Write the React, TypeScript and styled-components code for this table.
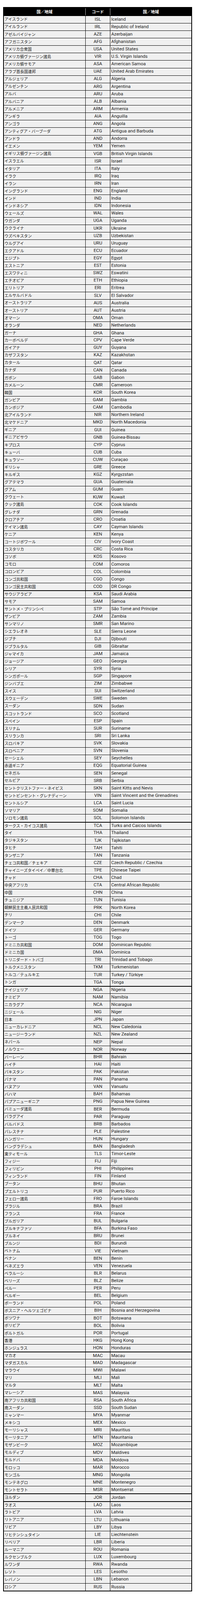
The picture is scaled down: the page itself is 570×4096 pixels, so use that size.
import React from "react";
import styled, { createGlobalStyle } from "styled-components";

type Entry = [string, string, string];

const groups: Entry[][] = [
  [
    ["アイスランド", "ISL", "Iceland"],
    ["アイルランド", "IRL", "Republic of Ireland"],
    ["アゼルバイジャン", "AZE", "Azerbaijan"],
    ["アフガニスタン", "AFG", "Afghanistan"],
    ["アメリカ合衆国", "USA", "United States"],
    ["アメリカ領ヴァージン諸島", "VIR", "U.S. Virgin Islands"],
    ["アメリカ領サモア", "ASA", "American Samoa"],
    ["アラブ首長国連邦", "UAE", "United Arab Emirates"],
    ["アルジェリア", "ALG", "Algeria"],
    ["アルゼンチン", "ARG", "Argentina"],
    ["アルバ", "ARU", "Aruba"],
    ["アルバニア", "ALB", "Albania"],
    ["アルメニア", "ARM", "Armenia"],
    ["アンギラ", "AIA", "Anguilla"],
    ["アンゴラ", "ANG", "Angola"],
    ["アンティグア・バーブーダ", "ATG", "Antigua and Barbuda"],
    ["アンドラ", "AND", "Andorra"],
    ["イエメン", "YEM", "Yemen"],
    ["イギリス領ヴァージン諸島", "VGB", "British Virgin Islands"],
    ["イスラエル", "ISR", "Israel"],
    ["イタリア", "ITA", "Italy"],
    ["イラク", "IRQ", "Iraq"],
    ["イラン", "IRN", "Iran"],
    ["イングランド", "ENG", "England"],
    ["インド", "IND", "India"],
    ["インドネシア", "IDN", "Indonesia"],
    ["ウェールズ", "WAL", "Wales"],
    ["ウガンダ", "UGA", "Uganda"],
    ["ウクライナ", "UKR", "Ukraine"],
    ["ウズベキスタン", "UZB", "Uzbekistan"],
    ["ウルグアイ", "URU", "Uruguay"],
    ["エクアドル", "ECU", "Ecuador"],
    ["エジプト", "EGY", "Egypt"],
    ["エストニア", "EST", "Estonia"],
    ["エスワティニ", "SWZ", "Eswatini"],
    ["エチオピア", "ETH", "Ethiopia"],
    ["エリトリア", "ERI", "Eritrea"],
    ["エルサルバドル", "SLV", "El Salvador"],
    ["オーストラリア", "AUS", "Australia"],
    ["オーストリア", "AUT", "Austria"],
    ["オマーン", "OMA", "Oman"],
    ["オランダ", "NED", "Netherlands"],
  ],
  [
    ["ガーナ", "GHA", "Ghana"],
    ["カーボベルデ", "CPV", "Cape Verde"],
    ["ガイアナ", "GUY", "Guyana"],
    ["カザフスタン", "KAZ", "Kazakhstan"],
    ["カタール", "QAT", "Qatar"],
    ["カナダ", "CAN", "Canada"],
    ["ガボン", "GAB", "Gabon"],
    ["カメルーン", "CMR", "Cameroon"],
    ["韓国", "KOR", "South Korea"],
    ["ガンビア", "GAM", "Gambia"],
    ["カンボジア", "CAM", "Cambodia"],
    ["北アイルランド", "NIR", "Northern Ireland"],
    ["北マケドニア", "MKD", "North Macedonia"],
    ["ギニア", "GUI", "Guinea"],
    ["ギニアビサウ", "GNB", "Guinea-Bissau"],
    ["キプロス", "CYP", "Cyprus"],
    ["キューバ", "CUB", "Cuba"],
    ["キュラソー", "CUW", "Curaçao"],
    ["ギリシャ", "GRE", "Greece"],
    ["キルギス", "KGZ", "Kyrgyzstan"],
    ["グアテマラ", "GUA", "Guatemala"],
    ["グアム", "GUM", "Guam"],
    ["クウェート", "KUW", "Kuwait"],
    ["クック諸島", "COK", "Cook Islands"],
    ["グレナダ", "GRN", "Grenada"],
    ["クロアチア", "CRO", "Croatia"],
    ["ケイマン諸島", "CAY", "Cayman Islands"],
    ["ケニア", "KEN", "Kenya"],
    ["コートジボワール", "CIV", "Ivory Coast"],
    ["コスタリカ", "CRC", "Costa Rica"],
    ["コソボ", "KOS", "Kosovo"],
    ["コモロ", "COM", "Comoros"],
    ["コロンビア", "COL", "Colombia"],
    ["コンゴ共和国", "CGO", "Congo"],
    ["コンゴ民主共和国", "COD", "DR Congo"],
  ],
  [
    ["サウジアラビア", "KSA", "Saudi Arabia"],
    ["サモア", "SAM", "Samoa"],
    ["サントメ・プリンシペ", "STP", "São Tomé and Príncipe"],
    ["ザンビア", "ZAM", "Zambia"],
    ["サンマリノ", "SMR", "San Marino"],
    ["シエラレオネ", "SLE", "Sierra Leone"],
    ["ジブチ", "DJI", "Djibouti"],
    ["ジブラルタル", "GIB", "Gibraltar"],
    ["ジャマイカ", "JAM", "Jamaica"],
    ["ジョージア", "GEO", "Georgia"],
    ["シリア", "SYR", "Syria"],
    ["シンガポール", "SGP", "Singapore"],
    ["ジンバブエ", "ZIM", "Zimbabwe"],
    ["スイス", "SUI", "Switzerland"],
    ["スウェーデン", "SWE", "Sweden"],
    ["スーダン", "SDN", "Sudan"],
    ["スコットランド", "SCO", "Scotland"],
    ["スペイン", "ESP", "Spain"],
    ["スリナム", "SUR", "Suriname"],
    ["スリランカ", "SRI", "Sri Lanka"],
    ["スロバキア", "SVK", "Slovakia"],
    ["スロベニア", "SVN", "Slovenia"],
    ["セーシェル", "SEY", "Seychelles"],
    ["赤道ギニア", "EQG", "Equatorial Guinea"],
    ["セネガル", "SEN", "Senegal"],
    ["セルビア", "SRB", "Serbia"],
    ["セントクリストファー・ネイビス", "SKN", "Saint Kitts and Nevis"],
    ["セントビンセント・グレナディーン", "VIN", "Saint Vincent and the Grenadines"],
    ["セントルシア", "LCA", "Saint Lucia"],
    ["ソマリア", "SOM", "Somalia"],
    ["ソロモン諸島", "SOL", "Solomon Islands"],
  ],
  [
    ["タークス・カイコス諸島", "TCA", "Turks and Caicos Islands"],
    ["タイ", "THA", "Thailand"],
    ["タジキスタン", "TJK", "Tajikistan"],
    ["タヒチ", "TAH", "Tahiti"],
    ["タンザニア", "TAN", "Tanzania"],
    ["チェコ共和国／チェキア", "CZE", "Czech Republic / Czechia"],
    ["チャイニーズタイペイ／中華台北", "TPE", "Chinese Taipei"],
    ["チャド", "CHA", "Chad"],
    ["中央アフリカ", "CTA", "Central African Republic"],
    ["中国", "CHN", "China"],
    ["チュニジア", "TUN", "Tunisia"],
    ["朝鮮民主主義人民共和国", "PRK", "North Korea"],
    ["チリ", "CHI", "Chile"],
    ["デンマーク", "DEN", "Denmark"],
    ["ドイツ", "GER", "Germany"],
    ["トーゴ", "TOG", "Togo"],
    ["ドミニカ共和国", "DOM", "Dominican Republic"],
    ["ドミニカ国", "DMA", "Dominica"],
    ["トリニダード・トバゴ", "TRI", "Trinidad and Tobago"],
    ["トルクメニスタン", "TKM", "Turkmenistan"],
    ["トルコ／テュルキエ", "TUR", "Turkey / Türkiye"],
    ["トンガ", "TGA", "Tonga"],
  ],
  [
    ["ナイジェリア", "NGA", "Nigeria"],
    ["ナミビア", "NAM", "Namibia"],
    ["ニカラグア", "NCA", "Nicaragua"],
    ["ニジェール", "NIG", "Niger"],
    ["日本", "JPN", "Japan"],
    ["ニューカレドニア", "NCL", "New Caledonia"],
    ["ニュージーランド", "NZL", "New Zealand"],
    ["ネパール", "NEP", "Nepal"],
    ["ノルウェー", "NOR", "Norway"],
  ],
  [
    ["バーレーン", "BHR", "Bahrain"],
    ["ハイチ", "HAI", "Haiti"],
    ["パキスタン", "PAK", "Pakistan"],
    ["パナマ", "PAN", "Panama"],
    ["バヌアツ", "VAN", "Vanuatu"],
    ["バハマ", "BAH", "Bahamas"],
    ["パプアニューギニア", "PNG", "Papua New Guinea"],
    ["バミューダ諸島", "BER", "Bermuda"],
    ["パラグアイ", "PAR", "Paraguay"],
    ["バルバドス", "BRB", "Barbados"],
    ["パレスチナ", "PLE", "Palestine"],
    ["ハンガリー", "HUN", "Hungary"],
    ["バングラデシュ", "BAN", "Bangladesh"],
    ["東ティモール", "TLS", "Timor-Leste"],
    ["フィジー", "FIJ", "Fiji"],
    ["フィリピン", "PHI", "Philippines"],
    ["フィンランド", "FIN", "Finland"],
    ["ブータン", "BHU", "Bhutan"],
    ["プエルトリコ", "PUR", "Puerto Rico"],
    ["フェロー諸島", "FRO", "Faroe Islands"],
    ["ブラジル", "BRA", "Brazil"],
    ["フランス", "FRA", "France"],
    ["ブルガリア", "BUL", "Bulgaria"],
    ["ブルキナファソ", "BFA", "Burkina Faso"],
    ["ブルネイ", "BRU", "Brunei"],
    ["ブルンジ", "BDI", "Burundi"],
    ["ベトナム", "VIE", "Vietnam"],
    ["ベナン", "BEN", "Benin"],
    ["ベネズエラ", "VEN", "Venezuela"],
    ["ベラルーシ", "BLR", "Belarus"],
    ["ベリーズ", "BLZ", "Belize"],
    ["ペルー", "PER", "Peru"],
    ["ベルギー", "BEL", "Belgium"],
    ["ポーランド", "POL", "Poland"],
    ["ボスニア・ヘルツェゴビナ", "BIH", "Bosnia and Herzegovina"],
    ["ボツワナ", "BOT", "Botswana"],
    ["ボリビア", "BOL", "Bolivia"],
    ["ポルトガル", "POR", "Portugal"],
    ["香港", "HKG", "Hong Kong"],
    ["ホンジュラス", "HON", "Honduras"],
  ],
  [
    ["マカオ", "MAC", "Macau"],
    ["マダガスカル", "MAD", "Madagascar"],
    ["マラウイ", "MWI", "Malawi"],
    ["マリ", "MLI", "Mali"],
    ["マルタ", "MLT", "Malta"],
    ["マレーシア", "MAS", "Malaysia"],
    ["南アフリカ共和国", "RSA", "South Africa"],
    ["南スーダン", "SSD", "South Sudan"],
    ["ミャンマー", "MYA", "Myanmar"],
    ["メキシコ", "MEX", "Mexico"],
    ["モーリシャス", "MRI", "Mauritius"],
    ["モーリタニア", "MTN", "Mauritania"],
    ["モザンビーク", "MOZ", "Mozambique"],
    ["モルディブ", "MDV", "Maldives"],
    ["モルドバ", "MDA", "Moldova"],
    ["モロッコ", "MAR", "Morocco"],
    ["モンゴル", "MNG", "Mongolia"],
    ["モンテネグロ", "MNE", "Montenegro"],
    ["モントセラト", "MSR", "Montserrat"],
  ],
  [["ヨルダン", "JOR", "Jordan"]],
  [
    ["ラオス", "LAO", "Laos"],
    ["ラトビア", "LVA", "Latvia"],
    ["リトアニア", "LTU", "Lithuania"],
    ["リビア", "LBY", "Libya"],
    ["リヒテンシュタイン", "LIE", "Liechtenstein"],
    ["リベリア", "LBR", "Liberia"],
    ["ルーマニア", "ROU", "Romania"],
    ["ルクセンブルク", "LUX", "Luxembourg"],
    ["ルワンダ", "RWA", "Rwanda"],
    ["レソト", "LES", "Lesotho"],
    ["レバノン", "LBN", "Lebanon"],
    ["ロシア", "RUS", "Russia"],
  ],
];

const GlobalStyle = createGlobalStyle`
  html, body {
    margin: 0;
    padding: 0;
    background: #ffffff;
  }
  body {
    font-family: "Roboto", "Noto Sans CJK JP", sans-serif;
  }
`;

const COLS = "208.4px 63.1px 1fr";

const Page = styled.div`
  padding: 18.2px 0 16px 7.65px;
`;

const Table = styled.div`
  box-sizing: border-box;
  width: 483.7px;
  border: 2px solid #000000;
  background: #f0f0f0;
`;

const HeaderRow = styled.div`
  display: grid;
  grid-template-columns: ${COLS};
  box-sizing: border-box;
  height: 19.6px;
  padding: 1px 0 1px;
  background: #000000;
`;

const HeaderCell = styled.div<{ $divider?: boolean }>`
  display: flex;
  align-items: center;
  justify-content: center;
  color: #ffffff;
  font-family: "Noto Sans CJK JP", sans-serif;
  font-weight: 700;
  font-size: 10.2px;
  line-height: 1;
  border-left: ${(p) => (p.$divider ? "1px solid #bdbdbd" : "0")};
`;

const Row = styled.div<{ $groupStart?: boolean }>`
  display: grid;
  grid-template-columns: ${COLS};
  box-sizing: border-box;
  height: 19.12px;
  border-top: ${(p) => (p.$groupStart ? "2px" : "1px")} solid #000000;
  color: #222222;
`;

const NameCell = styled.div`
  display: flex;
  align-items: center;
  padding: 0 0 1px 1.8px;
  font-family: "Noto Sans CJK JP", sans-serif;
  font-size: 10px;
  line-height: 1;
  white-space: nowrap;
  overflow: hidden;
`;

const CodeCell = styled.div`
  display: flex;
  align-items: center;
  justify-content: center;
  padding-bottom: 1px;
  border-left: 1px solid #000000;
  font-family: "Roboto", sans-serif;
  font-size: 11.6px;
  line-height: 1;
  white-space: nowrap;
`;

const EnglishCell = styled.div`
  display: flex;
  align-items: center;
  padding: 0 0 1px 2px;
  border-left: 1px solid #000000;
  font-family: "Roboto", sans-serif;
  font-size: 11.6px;
  line-height: 1;
  white-space: nowrap;
  overflow: hidden;
`;

export default function App() {
  return (
    <>
      <GlobalStyle />
      <Page>
        <Table>
          <HeaderRow>
            <HeaderCell>国／地域</HeaderCell>
            <HeaderCell $divider>コード</HeaderCell>
            <HeaderCell $divider>国／地域</HeaderCell>
          </HeaderRow>
          {groups.map((group, gi) =>
            group.map(([jp, code, en], ri) => (
              <Row key={code} $groupStart={gi > 0 && ri === 0}>
                <NameCell>{jp}</NameCell>
                <CodeCell>{code}</CodeCell>
                <EnglishCell>{en}</EnglishCell>
              </Row>
            ))
          )}
        </Table>
      </Page>
    </>
  );
}
